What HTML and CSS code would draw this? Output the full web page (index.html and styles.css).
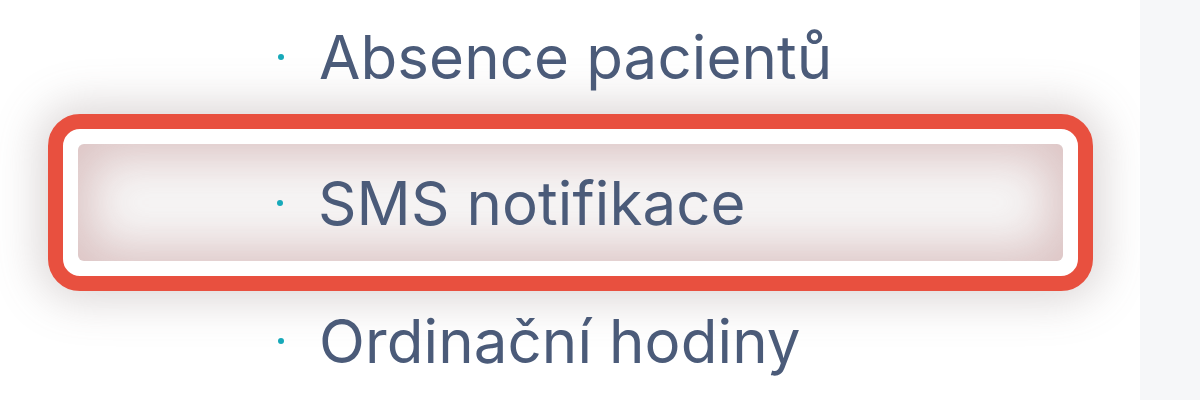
FILE: index.html
```html
<!DOCTYPE html>
<html lang="cs">
<head>
<meta charset="utf-8">
<title>Menu</title>
<link rel="stylesheet" href="styles.css">
</head>
<body>
<div class="page">
  <nav class="menu">
    <ul class="list">
      <li class="item item-first"><span class="dot"></span><span class="label">Absence pacientů</span></li>
      <li class="frame">
        <div class="inner"><span class="dot"></span><span class="label">SMS notifikace</span></div>
      </li>
      <li class="item item-last"><span class="dot"></span><span class="label">Ordinační hodiny</span></li>
    </ul>
  </nav>
  <aside class="strip"></aside>
</div>
</body>
</html>
```
FILE: styles.css
```css
html, body {
  margin: 0;
  padding: 0;
  background: #ffffff;
}
.page {
  display: flex;
  width: 1200px;
  height: 400px;
  overflow: hidden;
}
.menu {
  flex: 1;
  padding-left: 48px;
}
.list {
  list-style: none;
  margin: 0;
  padding: 0;
  width: 1045px;
  font-family: Inter, "Noto Sans", sans-serif;
  font-size: 60px;
  line-height: 1;
  color: #4b5b79;
}
.item {
  display: flex;
  align-items: center;
  padding-left: 230px;
}
.item-first { height: 114px; }
.item-last { height: 100px; }
.dot {
  width: 6px;
  height: 6px;
  border-radius: 50%;
  background: #17a9b9;
  margin-right: 35px;
  flex: none;
}
.label {
  white-space: nowrap;
  letter-spacing: 0.1px;
}
.frame {
  border: 15px solid #e8503f;
  border-radius: 32px;
  padding: 15px;
  background: #ffffff;
  box-shadow: 0 0 44px 10px rgba(120, 100, 100, 0.26);
}
.inner {
  display: flex;
  align-items: center;
  height: 117px;
  padding-left: 199px;
  border-radius: 6px;
  background: #f7f6f6;
  box-shadow: inset 0 0 48px 14px rgba(212, 182, 182, 0.8);
}
.strip {
  width: 60px;
  background: #f6f7f9;
}
```
